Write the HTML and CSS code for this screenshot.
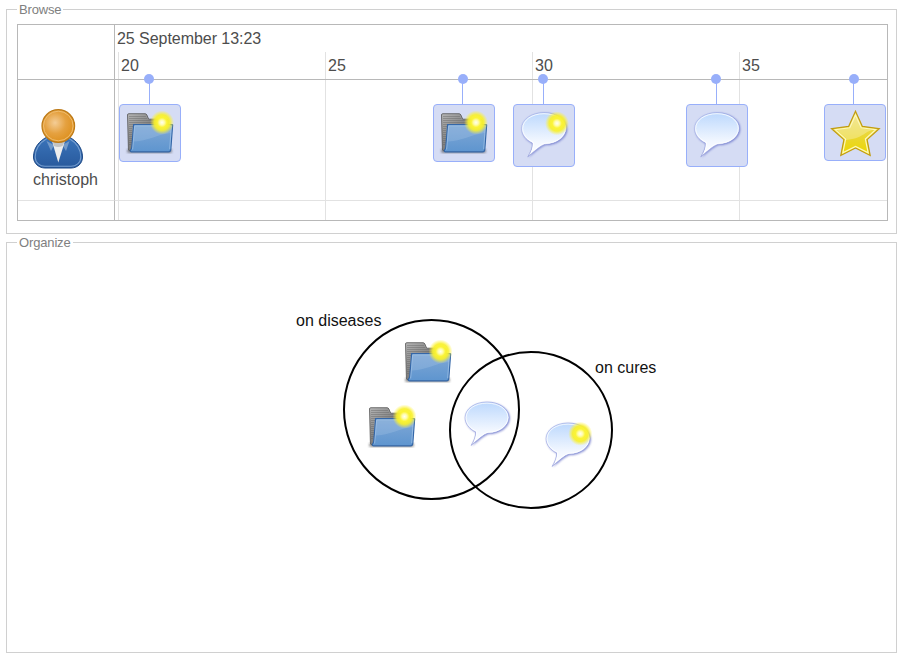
FILE: index.html
```html
<!DOCTYPE html>
<html lang="en">
<head>
<meta charset="utf-8">
<title>Browse and organize</title>
<link rel="stylesheet" href="styles.css">
</head>
<body>
<svg class="defs" aria-hidden="true">
  <defs>
    <linearGradient id="back" x1="0" y1="0" x2="1" y2="1"><stop offset="0" stop-color="#b4b4b4"/><stop offset=".45" stop-color="#828282"/><stop offset="1" stop-color="#5c5c5c"/></linearGradient>
    <linearGradient id="front" x1="0" y1="0" x2="0" y2="1"><stop offset="0" stop-color="#80a8d6"/><stop offset="1" stop-color="#5e95cf"/></linearGradient>
    <linearGradient id="bubble-fill" x1="0" y1="0" x2="0" y2="1"><stop offset="0" stop-color="#bcd8fd"/><stop offset=".65" stop-color="#f2f7ff"/><stop offset="1" stop-color="#fff"/></linearGradient>
    <linearGradient id="bubble-line" x1="0" y1="0" x2="1" y2="1"><stop offset="0" stop-color="#b3bbea"/><stop offset="1" stop-color="#7480cd"/></linearGradient>
    <radialGradient id="glow"><stop offset="0" stop-color="#fffff0"/><stop offset=".2" stop-color="#fffcae"/><stop offset=".4" stop-color="#fbf436"/><stop offset=".65" stop-color="#f8f02c" stop-opacity=".92"/><stop offset="1" stop-color="#fff23a" stop-opacity="0"/></radialGradient>
    <radialGradient id="head" cx=".4" cy=".4" r=".55"><stop offset="0" stop-color="#f4cd96"/><stop offset=".6" stop-color="#e5a140"/><stop offset="1" stop-color="#df9426"/></radialGradient>
    <linearGradient id="coat" x1="0" y1="0" x2="0" y2="1"><stop offset="0" stop-color="#3a74ba"/><stop offset="1" stop-color="#28599c"/></linearGradient>
    <linearGradient id="gold" x1="0" y1="0" x2="0" y2="1"><stop offset="0" stop-color="#eee075"/><stop offset=".55" stop-color="#ead733"/><stop offset="1" stop-color="#ecd700"/></linearGradient>
    <filter id="soft" x="-20%" y="-20%" width="140%" height="140%"><feGaussianBlur stdDeviation=".9"/></filter>
    <symbol id="folder" viewBox="0 0 50 46">
      <path d="M3 38h43q2 2 0 4H3q-2-2 0-4z" fill="#333" opacity=".5" filter="url(#soft)"/>
      <path d="M2.500 4q0-1.300 1.300-1.300H20q1.300 0 1.900 1.300l1.800 4.200h18q1.500 0 1.500 1.500V39.800H5q-1.600 0-1.600-1.800z" fill="url(#back)" stroke="#555" stroke-width=".8"/>
      <path d="M4 5.500h17M4 7.500h18M4 9.500h37M4 11.500h36M4 13.500h4M4 15.500h4M4 17.500h3M4 19.500h3M4 21.500h3M4 23.500h3M4 25.500h3M4 27.500h3M4 29.500h3M4 31.500h3M4 33.500h2" stroke="#5e5e5e" stroke-width=".6" opacity=".65"/>
      <path d="M8.600 13.600H47.200q.5 0 .4.700L45.800 38.500q-.2 2.300-2.400 2.300H6.600Q5 40.800 5.400 39.200Q6.500 38 6.800 36z" fill="url(#front)" stroke="#3467a8" stroke-width="1.200"/>
      <path d="M9.700 14.800H46.300L46 22C32 23 25 30 8.800 30.500z" fill="#a9c6e8" opacity=".3"/>
      <path d="M7.600 38.500L9.700 14.800H46.400L44.700 38.200" fill="none" stroke="#aac9eb" stroke-width=".8" opacity=".8"/>
    </symbol>
    <symbol id="bubble" viewBox="0 0 52 52">
      <path d="M25 2.600C37.500 2.600 47.400 9.500 47.400 18.300S37.500 34.400 26.500 34.400C23 34.800 18.500 38.500 8.800 46.800C11.500 42.500 13.800 37.500 13.300 33C6.800 30 2.600 24.500 2.600 18.500C2.600 9.500 12.500 2.600 25 2.600z" fill="#6670c8" opacity=".85" filter="url(#soft)" transform="translate(.8 .7)"/>
      <path d="M25 2.600C37.500 2.600 47.400 9.500 47.400 18.300S37.500 34.400 26.500 34.400C23 34.800 18.500 38.500 8.800 46.800C11.500 42.500 13.800 37.500 13.300 33C6.800 30 2.600 24.500 2.600 18.500C2.600 9.500 12.500 2.600 25 2.600z" fill="url(#bubble-fill)" stroke="url(#bubble-line)" stroke-width=".7"/>
      <path d="M25 3.700C37 3.700 46.300 10 46.300 18.300S37 33.300 26.300 33.300C22 34 18.500 37.200 12.300 42.400C14.200 38.500 14.900 35 14.400 32.300C8 29.500 3.700 24.500 3.700 18.500C3.700 10 13 3.700 25 3.700z" fill="none" stroke="#fff" stroke-width="1" opacity=".8"/>
    </symbol>
    <symbol id="star" viewBox="0 0 52 48">
      <path d="M26.500 2.300L33.400 17.400L50.300 19.600L38.100 30.600L41.200 46.500L26.500 39L11.800 46.500L14.900 30.600L2.500 19.600L19.600 17.400z" fill="url(#gold)" stroke="#c19b12" stroke-width="1.200"/>
      <path d="M26.500 6L32.200 18.800L46.700 20.600L36.400 30L39.200 43.800L26.500 37.400L13.800 43.800L16.600 30L6.300 20.600L20.800 18.800z" fill="none" stroke="#fdf8bd" stroke-width="1.200"/>
      <path d="M26.500 6.800L31.700 19.300L43.500 21C36.500 22 33.500 30 16 31L17.500 29.500L8 21L21.200 19.300z" fill="#fff" opacity=".28"/>
    </symbol>
    <symbol id="person" viewBox="0 0 54 64">
      <path d="M16 31C8 35 2.500 42 2.500 51C2.500 57.500 8 62 14 62H40C46.500 62 51.500 57.500 51.500 51C51.500 42 46 35 38 31z" fill="url(#coat)" stroke="#1f4a87"/>
      <path d="M16 32.500C9 36.500 4.200 43 4.200 51C4.200 57 9 60.300 14 60.300H40C45 60.300 49.800 57 49.800 51C49.800 43 45 36.500 38 32.500" fill="none" stroke="#779fd0" stroke-width="1.100"/>
      <path d="M15.500 35L20 45L23 39zM38.500 35L35 45L31.500 39z" fill="#7299c8"/>
      <path d="M21 35H34L27.300 56.500z" fill="#ededed"/>
      <path d="M21.500 35H34L31.500 40Q27 42 23 40z" fill="#999" opacity=".5"/>
      <circle cx="27.300" cy="20" r="16.300" fill="url(#head)" stroke="#bd7a17" stroke-width="1.200"/>
      <circle cx="27.300" cy="20" r="14.800" fill="none" stroke="#efbd70" stroke-width="1"/>
    </symbol>
  </defs>
</svg>

<fieldset class="panel browse">
  <legend>Browse</legend>
  <div class="timeline">
    <div class="corner"></div>
    <div class="scale">
      <div class="date">25 September 13:23</div>
      <div class="ticks"><span>20</span><span>25</span><span>30</span><span>35</span></div>
    </div>
    <div class="user">
      <svg class="avatar" width="54" height="64"><use href="#person"/></svg>
      <span>christoph</span>
    </div>
    <div class="track"></div>
    <div class="spare name"></div>
    <div class="spare"></div>
    <div class="grid"><i></i><i></i><i></i><i></i></div>
    <div class="events">
      <div class="event" style="left:4px;--dot:25px;--stem:30px"><svg width="50" height="46"><use href="#folder"/><circle cx="37" cy="11.500" r="12" fill="url(#glow)"/></svg></div>
      <div class="event" style="left:318px;--dot:25px;--stem:29px"><svg width="50" height="46"><use href="#folder"/><circle cx="37" cy="11.500" r="12" fill="url(#glow)"/></svg></div>
      <div class="event comment" style="left:398px;--dot:25px;--stem:30px"><svg width="52" height="52"><use href="#bubble"/><circle cx="38" cy="13.300" r="12" fill="url(#glow)"/></svg></div>
      <div class="event comment" style="left:571px;--dot:25px;--stem:30px"><svg width="52" height="52"><use href="#bubble"/></svg></div>
      <div class="event rating" style="left:709px;--dot:25px;--stem:29px"><svg width="52" height="48"><use href="#star"/></svg></div>
    </div>
  </div>
</fieldset>

<fieldset class="panel organize">
  <legend>Organize</legend>
  <svg class="venn" width="889" height="402" viewBox="7 250 889 402">
    <use href="#folder" x="403" y="340" width="50" height="46"/><circle cx="440.500" cy="351.500" r="12" fill="url(#glow)"/>
    <use href="#folder" x="367" y="405" width="50" height="46"/><circle cx="404.500" cy="416.500" r="12" fill="url(#glow)"/>
    <use href="#bubble" x="462.500" y="399.500" width="51" height="51"/>
    <use href="#bubble" x="543.500" y="420.500" width="51" height="51"/><circle cx="580.300" cy="433.700" r="12" fill="url(#glow)"/>
    <ellipse class="set" cx="431.500" cy="409.500" rx="87.500" ry="89.500"/>
    <ellipse class="set" cx="531" cy="430" rx="81" ry="78"/>
    <text x="296" y="326">on diseases</text>
    <text x="595" y="373">on cures</text>
  </svg>
</fieldset>
</body>
</html>
```
FILE: styles.css
```css
* { box-sizing: border-box; }
body {
  margin: 0;
  padding: 2px 6px 0;
  background: #fff;
  color: #4d4d4d;
  font: 16px/18px "Liberation Sans", Arial, sans-serif;
}
svg { display: block; }
.defs { position: absolute; width: 0; height: 0; }
.panel {
  width: 891px;
  min-width: 0;
  margin: 0;
  border: 1px solid #d0d0d0;
}
.panel legend {
  margin: 0;
  padding: 0 2px;
  color: #808080;
  font-size: 13px;
  line-height: 15px;
  letter-spacing: -.15px;
}
.browse { height: 232px; padding: 7px 10px 12px; }
.organize { height: 418px; margin-top: 1px; padding: 0; }
.organize legend { margin-left: 10px; }

.timeline {
  position: relative;
  display: grid;
  grid-template-columns: 97px minmax(0, 1fr);
  grid-template-rows: 55px 121px 1fr;
  width: 871px;
  height: 197px;
  border: 1px solid #b8b8b8;
}
.corner, .user, .name { border-right: 1px solid #b8b8b8; }
.corner, .scale { border-bottom: 1px solid #b8b8b8; }
.user, .track { border-bottom: 1px solid #e2e2e2; }
.scale { padding: 5px 0 0 2px; }
.date { height: 27px; letter-spacing: -.05px; }
.ticks {
  display: grid;
  grid-template-columns: repeat(3, 207px) 1fr;
  padding-left: 4px;
}
.user {
  display: flex;
  flex-direction: column;
  align-items: flex-start;
  padding: 26px 0 0 13px;
}
.user span { padding: 1px 0 0 2px; }
.grid {
  position: absolute;
  z-index: -1;
  top: 27px;
  bottom: 0;
  left: 100px;
  right: 0;
  display: grid;
  grid-template-columns: repeat(3, 207px) 1fr;
}
.grid i { border-left: 1px solid #e2e2e2; }
.events { position: absolute; left: 97px; top: 79px; }
.event {
  position: absolute;
  top: 0;
  width: 62px;
  height: 58px;
  padding: 6px 5px;
  border: 1px solid #98affa;
  border-radius: 4px;
  background: #d5dcf4;
}
.comment { height: 63px; padding-top: 5px; }
.rating { height: 57px; padding: 4px; }
.event::before {
  content: "";
  position: absolute;
  left: calc(var(--dot) - 1px);
  top: -31px;
  width: 10px;
  height: 10px;
  border-radius: 50%;
  background: #98affa;
}
.event::after {
  content: "";
  position: absolute;
  left: calc(var(--stem) - 1px);
  top: -26px;
  width: 1px;
  height: 25px;
  background: #98affa;
}
.set { fill: none; stroke: #000; stroke-width: 2; }
.venn text { fill: #111; font-size: 16px; }
```
